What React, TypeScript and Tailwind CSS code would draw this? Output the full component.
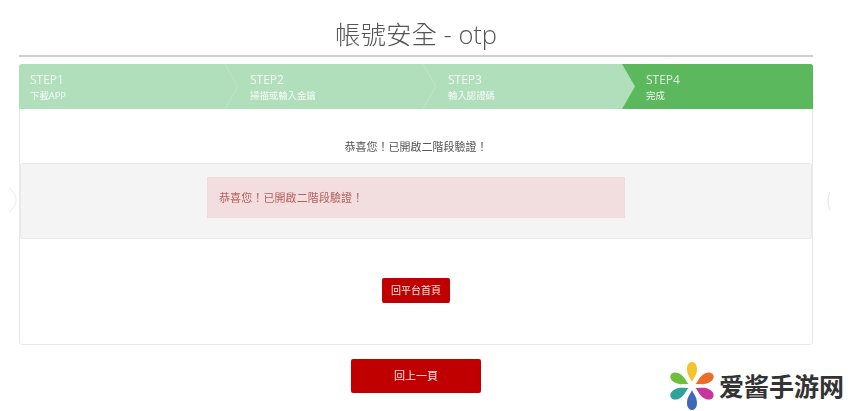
import React from "react";

const FONT = "font-['Open_Sans','Noto_Sans_CJK_TC',sans-serif]";

interface Step {
  title: string;
  label: string;
  width: string;
  active?: boolean;
}

const steps: Step[] = [
  { title: "STEP1", label: "下載APP", width: "w-[207px] pl-[11px]" },
  { title: "STEP2", label: "掃描或輸入金鑰", width: "w-[198px] pl-[24px]" },
  { title: "STEP3", label: "輸入認證碼", width: "w-[198px] pl-[24px]" },
  { title: "STEP4", label: "完成", width: "flex-1 pl-[24px]", active: true },
];

const Petal = ({ angle, color }: { angle: number; color: string }) => (
  <path
    d="M0 -4 C-1.5 -8 -5 -11 -5 -17 C-5 -21.5 -2.6 -24 0 -24 C2.6 -24 5 -21.5 5 -17 C5 -11 1.5 -8 0 -4 Z"
    fill={color}
    transform={`rotate(${angle})`}
  />
);

const StepItem = ({ step, next }: { step: Step; next?: Step }) => (
  <div className={`relative h-full ${step.width}`}>
    {step.active && (
      <svg className="absolute left-0 top-0 h-full w-full" viewBox="0 0 191 45" preserveAspectRatio="none">
        <path d="M0 0 H191 V45 H0 L13 22.5 Z" fill="#5cb85c" />
      </svg>
    )}
    <div className="relative pt-[8px] text-white">
      <div className="text-[12px] leading-[16px] opacity-80">{step.title}</div>
      <div className="mt-[1px] text-[9.4px] leading-[14px] opacity-90">{step.label}</div>
    </div>
    {next && !next.active && (
      <svg className="absolute right-[-13px] top-0 z-10 h-full w-[14px]" viewBox="0 0 14 45" fill="none">
        <path d="M0 0 L13 22.5 L0 45" stroke="#c2e3c5" strokeWidth="1" />
      </svg>
    )}
  </div>
);

export default function App() {
  return (
    <div className={`relative h-[411px] w-[857px] overflow-hidden bg-white ${FONT}`}>
      <div className="blur-[0.4px]">
        <div className="ml-[19px] flex w-[794px] flex-col">
          <h1 className="h-[57px] border-b-2 border-[#cfcfcf] pt-[16px] text-center text-[25.5px] font-light leading-[36px] text-[#555555]">
            帳號安全 - otp
          </h1>

          <div className="mt-[7px] h-[281px] rounded-[3px] border border-[#e8e8e8]">
            <div className="mx-[-1px] mt-[-1px] flex h-[45px] overflow-hidden rounded-t-[3px] bg-[#b2dfbb]">
              {steps.map((step, i) => (
                <StepItem key={step.title} step={step} next={steps[i + 1]} />
              ))}
            </div>

            <p className="pt-[31px] text-center text-[11px] leading-[14px] text-[#555555]">
              恭喜您！已開啟二階段驗證！
            </p>

            <div className="mt-[9px] h-[76px] rounded-[2px] border border-[#e9e9e9] bg-[#f4f4f4] pl-[186px] pt-[13px]">
              <div className="flex h-[41px] w-[418px] items-center border border-[#f0dcdd] bg-[#f2dede] pl-[11px] pt-[1px] text-[11px] tracking-[0.1px] text-[#b5605f]">
                恭喜您！已開啟二階段驗證！
              </div>
            </div>

            <div className="flex justify-center pt-[39px]">
              <button className="h-[25px] w-[68px] rounded-[2px] bg-[#c00000] text-[10px] text-[#ffe4e4]">
                回平台首頁
              </button>
            </div>
          </div>

          <div className="flex justify-center pt-[14px]">
            <button className="h-[34px] w-[130px] rounded-[2px] bg-[#c00000] text-[11px] text-[#ffe4e4]">
              回上一頁
            </button>
          </div>
        </div>
      </div>

      {/* faint carousel arrows */}
      <svg className="absolute left-[8px] top-[187px]" width="10" height="26" viewBox="0 0 10 26" fill="none">
        <path d="M1 1 Q8 7 8 13 Q8 19 1 25" stroke="#ececec" strokeWidth="1" />
      </svg>
      <svg className="absolute left-[825px] top-[191px]" width="8" height="20" viewBox="0 0 8 20" fill="none">
        <path d="M5 1 Q1 10 5 19" stroke="#e8e8e8" strokeWidth="1.2" />
      </svg>

      {/* watermark */}
      <div className="absolute left-[668px] top-[361px] flex items-center gap-[3px]">
        <svg width="48" height="50" viewBox="-24 -25 48 50">
          <Petal angle={0} color="#f5c32c" />
          <Petal angle={62} color="#ee6c2a" />
          <Petal angle={118} color="#c8359a" />
          <Petal angle={180} color="#3c69b8" />
          <Petal angle={242} color="#2fa39a" />
          <Petal angle={298} color="#6fbe3c" />
        </svg>
        <span className="pb-[3px] font-['Noto_Sans_CJK_SC',sans-serif] text-[25px] font-bold leading-[30px] text-[#333333]">
          爱酱手游网
        </span>
      </div>
    </div>
  );
}
